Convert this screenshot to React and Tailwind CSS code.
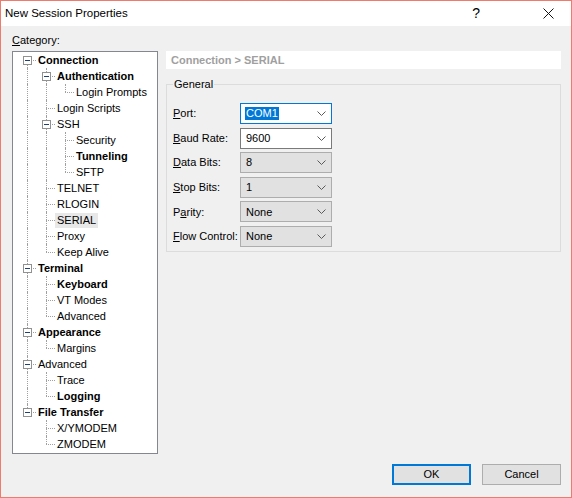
import React from 'react';

const font = { fontFamily: '"Liberation Sans", Arial, sans-serif' };

const treeData = [
  {
    label: 'Connection', bold: true, kids: [
      { label: 'Authentication', bold: true, kids: [{ label: 'Login Prompts' }] },
      { label: 'Login Scripts' },
      { label: 'SSH', kids: [{ label: 'Security' }, { label: 'Tunneling', bold: true }, { label: 'SFTP' }] },
      { label: 'TELNET' },
      { label: 'RLOGIN' },
      { label: 'SERIAL', selected: true },
      { label: 'Proxy' },
      { label: 'Keep Alive' },
    ],
  },
  {
    label: 'Terminal', bold: true, kids: [
      { label: 'Keyboard', bold: true },
      { label: 'VT Modes' },
      { label: 'Advanced' },
    ],
  },
  { label: 'Appearance', bold: true, kids: [{ label: 'Margins' }] },
  { label: 'Advanced', kids: [{ label: 'Trace' }, { label: 'Logging', bold: true }] },
  { label: 'File Transfer', bold: true, kids: [{ label: 'X/YMODEM' }, { label: 'ZMODEM' }] },
];

function flatten(nodes, depth = 0, rails = [], out = []) {
  nodes.forEach((n, i) => {
    const last = i === nodes.length - 1;
    const first = depth === 0 && i === 0;
    out.push({ ...n, depth, rails, last, first });
    if (n.kids) flatten(n.kids, depth + 1, [...rails, !last], out);
  });
  return out;
}

const rows = flatten(treeData);

function TreeRow({ row }) {
  return (
    <div className="flex items-center h-4">
      {row.rails.map((rail, i) => (
        <div key={i} className="relative w-[19px] h-4 shrink-0">
          {rail && <div className="absolute left-[9px] top-0 bottom-0 border-l border-dotted border-[#a0a0a0]" />}
        </div>
      ))}
      <div className="relative w-[18px] h-4 shrink-0">
        {!row.first && <div className="absolute left-[9px] top-0 h-[8px] border-l border-dotted border-[#a0a0a0]" />}
        {!row.last && <div className="absolute left-[9px] top-[8px] bottom-0 border-l border-dotted border-[#a0a0a0]" />}
        <div className="absolute left-[9px] right-0 top-[8px] border-t border-dotted border-[#a0a0a0]" />
        {row.kids && (
          <div className="absolute left-[5px] top-[4px] w-[9px] h-[9px] border border-[#919191] bg-white flex items-center justify-center">
            <div className="w-[5px] h-px bg-[#1f3f77]" />
          </div>
        )}
      </div>
      <span
        className={`pl-[2px] pr-[2px] leading-[15px] whitespace-nowrap text-black ${row.bold ? 'font-bold' : ''} ${row.selected ? 'bg-[#e8e8e8]' : ''}`}
      >
        {row.label}
      </span>
    </div>
  );
}

function Chevron() {
  return (
    <svg width="9" height="5" viewBox="0 0 9 5" className="shrink-0">
      <polyline points="0.5,0.5 4.5,4.5 8.5,0.5" fill="none" stroke="#5a5a5a" strokeWidth="1" />
    </svg>
  );
}

function Combo({ value, variant }) {
  const styles = {
    focus: 'bg-white border-[#0078d7]',
    edit: 'bg-white border-[#7a7a7a]',
    list: 'bg-[#e1e1e1] border-[#adadad]',
  };
  return (
    <div className={`flex items-center justify-between h-[21px] w-[92px] border pl-[5px] pr-[5px] ${styles[variant]}`}>
      {variant === 'focus' ? (
        <span className="bg-[#0078d7] text-white px-px leading-[13px] -ml-px">{value}</span>
      ) : (
        <span className="text-black">{value}</span>
      )}
      <Chevron />
    </div>
  );
}

const fields = [
  { pre: '', key: 'P', post: 'ort:', value: 'COM1', variant: 'focus' },
  { pre: '', key: 'B', post: 'aud Rate:', value: '9600', variant: 'edit' },
  { pre: '', key: 'D', post: 'ata Bits:', value: '8', variant: 'list' },
  { pre: '', key: 'S', post: 'top Bits:', value: '1', variant: 'list' },
  { pre: 'P', key: 'a', post: 'rity:', value: 'None', variant: 'list' },
  { pre: '', key: 'F', post: 'low Control:', value: 'None', variant: 'list' },
];

export default function App() {
  return (
    <div
      className="w-[572px] h-[498px] border border-[#ee7b6e] flex flex-col text-[11px] text-black overflow-hidden"
      style={font}
    >
      <div className="h-[25px] bg-white flex items-center shrink-0">
        <span className="ml-[4px] text-[11.5px]">New Session Properties</span>
        <span className="ml-auto mr-[63px] text-[14px]">?</span>
        <svg width="11" height="11" viewBox="0 0 11 11" className="mr-[17px]">
          <path d="M0.5 0.5 L10.5 10.5 M10.5 0.5 L0.5 10.5" stroke="#111" strokeWidth="1" />
        </svg>
      </div>

      <div className="flex-1 bg-[#f0f0f0] flex flex-col pl-[11px] pr-[10px] pt-[7px]">
        <div className="leading-[14px]">
          <span className="underline">C</span>ategory:
        </div>

        <div className="flex mt-[4px]">
          <div className="w-[146px] h-[403px] border border-[#828790] bg-white pl-[5px] shrink-0">
            {rows.map((row, i) => (
              <TreeRow key={i} row={row} />
            ))}
          </div>

          <div className="ml-[8px] flex-1 flex flex-col">
            <div className="h-[18px] bg-white flex items-center pl-[5px] font-bold text-[#a0a0a0]">
              Connection &gt; SERIAL
            </div>

            <div className="relative mt-[15px] h-[168px] border border-[#dcdcdc]">
              <span className="absolute left-[6px] -top-[8px] px-px bg-[#f0f0f0] leading-[14px]">General</span>
              <div className="pl-[6px] pt-[18px] flex flex-col gap-[3.6px]">
                {fields.map((f) => (
                  <div key={f.post} className="flex items-center">
                    <span className="w-[67px] whitespace-nowrap">
                      {f.pre}
                      <span className="underline">{f.key}</span>
                      {f.post}
                    </span>
                    <Combo value={f.value} variant={f.variant} />
                  </div>
                ))}
              </div>
            </div>
          </div>
        </div>

        <div className="flex justify-end gap-[11px] mt-[10px]">
          <button className="w-[79px] h-[21px] border-2 border-[#0078d7] bg-[#e1e1e1] text-black">OK</button>
          <button className="w-[79px] h-[21px] border border-[#adadad] bg-[#e1e1e1] text-black">Cancel</button>
        </div>
      </div>
    </div>
  );
}
